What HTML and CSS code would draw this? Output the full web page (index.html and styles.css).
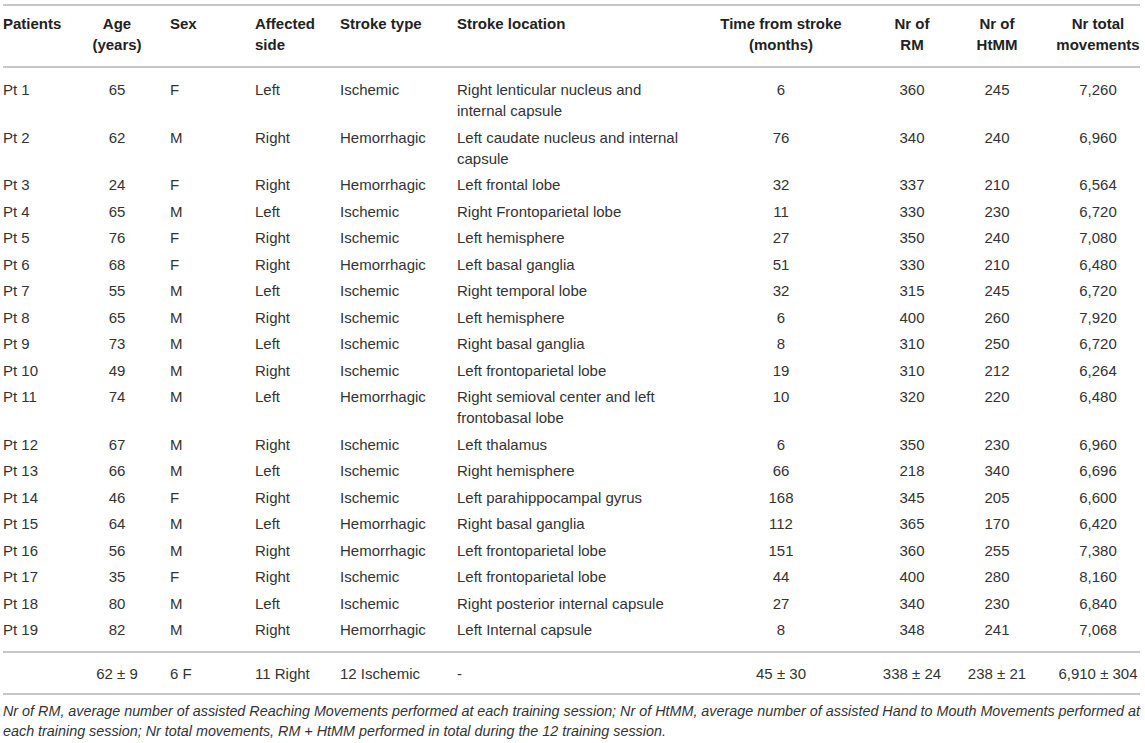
FILE: index.html
```html
<!DOCTYPE html>
<html lang="en">
<head>
<meta charset="utf-8">
<title>Patients table</title>
<link rel="stylesheet" href="styles.css">
</head>
<body>
<table class="data">
  <colgroup>
    <col class="w1"><col class="w2"><col class="w3"><col class="w4"><col class="w5">
    <col class="w6"><col class="w7"><col class="w8"><col class="w9"><col class="w10">
  </colgroup>
  <thead>
    <tr>
      <th class="c1">Patients</th>
      <th class="c2">Age<br>(years)</th>
      <th class="c3">Sex</th>
      <th class="c4">Affected<br>side</th>
      <th class="c5">Stroke type</th>
      <th class="c6">Stroke location</th>
      <th class="c7">Time from stroke<br>(months)</th>
      <th class="c8">Nr of<br>RM</th>
      <th class="c9">Nr of<br>HtMM</th>
      <th class="c10">Nr total<br>movements</th>
    </tr>
  </thead>
  <tbody>
    <tr><td class="c1">Pt 1</td><td class="c2">65</td><td class="c3">F</td><td class="c4">Left</td><td class="c5">Ischemic</td><td class="c6">Right lenticular nucleus and internal capsule</td><td class="c7">6</td><td class="c8">360</td><td class="c9">245</td><td class="c10">7,260</td></tr>
    <tr><td class="c1">Pt 2</td><td class="c2">62</td><td class="c3">M</td><td class="c4">Right</td><td class="c5">Hemorrhagic</td><td class="c6">Left caudate nucleus and internal capsule</td><td class="c7">76</td><td class="c8">340</td><td class="c9">240</td><td class="c10">6,960</td></tr>
    <tr><td class="c1">Pt 3</td><td class="c2">24</td><td class="c3">F</td><td class="c4">Right</td><td class="c5">Hemorrhagic</td><td class="c6">Left frontal lobe</td><td class="c7">32</td><td class="c8">337</td><td class="c9">210</td><td class="c10">6,564</td></tr>
    <tr><td class="c1">Pt 4</td><td class="c2">65</td><td class="c3">M</td><td class="c4">Left</td><td class="c5">Ischemic</td><td class="c6">Right Frontoparietal lobe</td><td class="c7">11</td><td class="c8">330</td><td class="c9">230</td><td class="c10">6,720</td></tr>
    <tr><td class="c1">Pt 5</td><td class="c2">76</td><td class="c3">F</td><td class="c4">Right</td><td class="c5">Ischemic</td><td class="c6">Left hemisphere</td><td class="c7">27</td><td class="c8">350</td><td class="c9">240</td><td class="c10">7,080</td></tr>
    <tr><td class="c1">Pt 6</td><td class="c2">68</td><td class="c3">F</td><td class="c4">Right</td><td class="c5">Hemorrhagic</td><td class="c6">Left basal ganglia</td><td class="c7">51</td><td class="c8">330</td><td class="c9">210</td><td class="c10">6,480</td></tr>
    <tr><td class="c1">Pt 7</td><td class="c2">55</td><td class="c3">M</td><td class="c4">Left</td><td class="c5">Ischemic</td><td class="c6">Right temporal lobe</td><td class="c7">32</td><td class="c8">315</td><td class="c9">245</td><td class="c10">6,720</td></tr>
    <tr><td class="c1">Pt 8</td><td class="c2">65</td><td class="c3">M</td><td class="c4">Right</td><td class="c5">Ischemic</td><td class="c6">Left hemisphere</td><td class="c7">6</td><td class="c8">400</td><td class="c9">260</td><td class="c10">7,920</td></tr>
    <tr><td class="c1">Pt 9</td><td class="c2">73</td><td class="c3">M</td><td class="c4">Left</td><td class="c5">Ischemic</td><td class="c6">Right basal ganglia</td><td class="c7">8</td><td class="c8">310</td><td class="c9">250</td><td class="c10">6,720</td></tr>
    <tr><td class="c1">Pt 10</td><td class="c2">49</td><td class="c3">M</td><td class="c4">Right</td><td class="c5">Ischemic</td><td class="c6">Left frontoparietal lobe</td><td class="c7">19</td><td class="c8">310</td><td class="c9">212</td><td class="c10">6,264</td></tr>
    <tr><td class="c1">Pt 11</td><td class="c2">74</td><td class="c3">M</td><td class="c4">Left</td><td class="c5">Hemorrhagic</td><td class="c6">Right semioval center and left frontobasal lobe</td><td class="c7">10</td><td class="c8">320</td><td class="c9">220</td><td class="c10">6,480</td></tr>
    <tr><td class="c1">Pt 12</td><td class="c2">67</td><td class="c3">M</td><td class="c4">Right</td><td class="c5">Ischemic</td><td class="c6">Left thalamus</td><td class="c7">6</td><td class="c8">350</td><td class="c9">230</td><td class="c10">6,960</td></tr>
    <tr><td class="c1">Pt 13</td><td class="c2">66</td><td class="c3">M</td><td class="c4">Left</td><td class="c5">Ischemic</td><td class="c6">Right hemisphere</td><td class="c7">66</td><td class="c8">218</td><td class="c9">340</td><td class="c10">6,696</td></tr>
    <tr><td class="c1">Pt 14</td><td class="c2">46</td><td class="c3">F</td><td class="c4">Right</td><td class="c5">Ischemic</td><td class="c6">Left parahippocampal gyrus</td><td class="c7">168</td><td class="c8">345</td><td class="c9">205</td><td class="c10">6,600</td></tr>
    <tr><td class="c1">Pt 15</td><td class="c2">64</td><td class="c3">M</td><td class="c4">Left</td><td class="c5">Hemorrhagic</td><td class="c6">Right basal ganglia</td><td class="c7">112</td><td class="c8">365</td><td class="c9">170</td><td class="c10">6,420</td></tr>
    <tr><td class="c1">Pt 16</td><td class="c2">56</td><td class="c3">M</td><td class="c4">Right</td><td class="c5">Hemorrhagic</td><td class="c6">Left frontoparietal lobe</td><td class="c7">151</td><td class="c8">360</td><td class="c9">255</td><td class="c10">7,380</td></tr>
    <tr><td class="c1">Pt 17</td><td class="c2">35</td><td class="c3">F</td><td class="c4">Right</td><td class="c5">Ischemic</td><td class="c6">Left frontoparietal lobe</td><td class="c7">44</td><td class="c8">400</td><td class="c9">280</td><td class="c10">8,160</td></tr>
    <tr><td class="c1">Pt 18</td><td class="c2">80</td><td class="c3">M</td><td class="c4">Left</td><td class="c5">Ischemic</td><td class="c6">Right posterior internal capsule</td><td class="c7">27</td><td class="c8">340</td><td class="c9">230</td><td class="c10">6,840</td></tr>
    <tr><td class="c1">Pt 19</td><td class="c2">82</td><td class="c3">M</td><td class="c4">Right</td><td class="c5">Hemorrhagic</td><td class="c6">Left Internal capsule</td><td class="c7">8</td><td class="c8">348</td><td class="c9">241</td><td class="c10">7,068</td></tr>
  </tbody>
  <tfoot>
    <tr><td class="c1"></td><td class="c2">62 ± 9</td><td class="c3">6 F</td><td class="c4">11 Right</td><td class="c5">12 Ischemic</td><td class="c6">-</td><td class="c7">45 ± 30</td><td class="c8">338 ± 24</td><td class="c9">238 ± 21</td><td class="c10">6,910 ± 304</td></tr>
  </tfoot>
</table>
<p class="note">Nr of RM, average number of assisted Reaching Movements performed at each training session; Nr of HtMM, average number of assisted Hand to Mouth Movements performed at each training session; Nr total movements, RM + HtMM performed in total during the 12 training session.</p>
</body>
</html>
```
FILE: styles.css
```css
html, body {
  margin: 0;
  padding: 0;
  background: #ffffff;
}

body {
  font-family: "Liberation Sans", Arial, sans-serif;
  color: #333333;
}

.data {
  margin: 4px 0 0 3px;
  width: 1137px;
  table-layout: fixed;
  border-collapse: collapse;
  font-size: 15px;
  line-height: 21px;
}

.w1 { width: 71px; }
.w2 { width: 86px; }
.w3 { width: 85px; }
.w4 { width: 85px; }
.w5 { width: 117px; }
.w6 { width: 250px; }
.w7 { width: 168px; }
.w8 { width: 94px; }
.w9 { width: 76px; }
.w10 { width: 105px; }

.data th,
.data td {
  padding: 3px 0 2.5px 0;
  vertical-align: top;
  text-align: left;
  white-space: nowrap;
}

.data th {
  font-weight: bold;
  color: #222222;
  padding-top: 7px;
  padding-bottom: 11px;
}

.data thead tr {
  border-top: 2px solid #c6c6c6;
  border-bottom: 2px solid #c6c6c6;
}

.data tbody tr:first-child td {
  padding-top: 11px;
}

.data tbody tr:last-child td {
  padding-bottom: 11px;
}

.data tfoot tr {
  border-top: 2px solid #c6c6c6;
  border-bottom: 2px solid #c6c6c6;
}

.data tfoot td {
  padding-top: 10px;
  padding-bottom: 9px;
}

.data .c2,
.data .c7,
.data .c8,
.data .c9,
.data .c10 {
  text-align: center;
}

.data .c3,
.data .c4,
.data .c5 {
  padding-left: 10px;
}

.data .c6 {
  padding-left: 10px;
  padding-right: 10px;
  white-space: normal;
}

.data .c10 {
  padding-left: 21px;
}

.note {
  margin: 7px 0 0 3px;
  width: 1142px;
  font-size: 14.35px;
  line-height: 19.5px;
  font-style: italic;
  color: #333333;
}
```
